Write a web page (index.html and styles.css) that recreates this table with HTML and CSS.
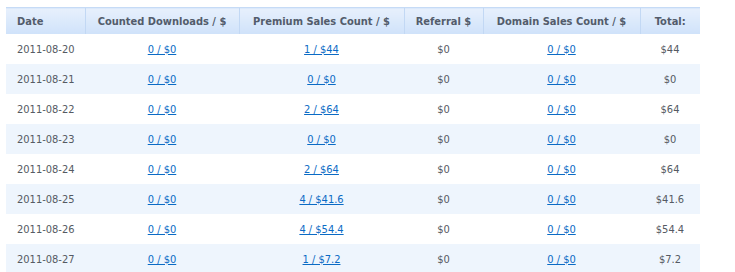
FILE: index.html
```html
<!DOCTYPE html>
<html>
<head>
<meta charset="utf-8">
<link rel="stylesheet" href="styles.css">
</head>
<body>
<div class="wrap">
<table class="stats">
  <colgroup>
    <col class="c-date"><col class="c-dl"><col class="c-prem"><col class="c-ref"><col class="c-dom"><col class="c-tot">
  </colgroup>
  <thead>
    <tr>
      <th class="left">Date</th>
      <th>Counted Downloads / $</th>
      <th>Premium Sales Count / $</th>
      <th>Referral $</th>
      <th>Domain Sales Count / $</th>
      <th>Total:</th>
    </tr>
  </thead>
  <tbody>
    <tr><td class="left">2011-08-20</td><td><a href="#">0 / $0</a></td><td><a href="#">1 / $44</a></td><td>$0</td><td><a href="#">0 / $0</a></td><td>$44</td></tr>
    <tr class="alt"><td class="left">2011-08-21</td><td><a href="#">0 / $0</a></td><td><a href="#">0 / $0</a></td><td>$0</td><td><a href="#">0 / $0</a></td><td>$0</td></tr>
    <tr><td class="left">2011-08-22</td><td><a href="#">0 / $0</a></td><td><a href="#">2 / $64</a></td><td>$0</td><td><a href="#">0 / $0</a></td><td>$64</td></tr>
    <tr class="alt"><td class="left">2011-08-23</td><td><a href="#">0 / $0</a></td><td><a href="#">0 / $0</a></td><td>$0</td><td><a href="#">0 / $0</a></td><td>$0</td></tr>
    <tr><td class="left">2011-08-24</td><td><a href="#">0 / $0</a></td><td><a href="#">2 / $64</a></td><td>$0</td><td><a href="#">0 / $0</a></td><td>$64</td></tr>
    <tr class="alt"><td class="left">2011-08-25</td><td><a href="#">0 / $0</a></td><td><a href="#">4 / $41.6</a></td><td>$0</td><td><a href="#">0 / $0</a></td><td>$41.6</td></tr>
    <tr><td class="left">2011-08-26</td><td><a href="#">0 / $0</a></td><td><a href="#">4 / $54.4</a></td><td>$0</td><td><a href="#">0 / $0</a></td><td>$54.4</td></tr>
    <tr class="alt"><td class="left">2011-08-27</td><td><a href="#">0 / $0</a></td><td><a href="#">1 / $7.2</a></td><td>$0</td><td><a href="#">0 / $0</a></td><td>$7.2</td></tr>
  </tbody>
</table>
</div>
</body>
</html>
```
FILE: styles.css
```css
html, body {
  margin: 0;
  padding: 0;
  background: #ffffff;
}
.wrap {
  padding: 7px 0 0 6px;
}
.stats {
  border-collapse: collapse;
  table-layout: fixed;
  width: 694px;
  font-family: "DejaVu Sans Condensed", "DejaVu Sans", sans-serif;
  font-stretch: condensed;
  font-size: 11px;
  color: #555a63;
}
.c-date { width: 79px; }
.c-dl { width: 154px; }
.c-prem { width: 165px; }
.c-ref { width: 79px; }
.c-dom { width: 157px; }
.c-tot { width: 60px; }
.stats th {
  height: 25px;
  padding: 1px 0 0 0;
  border-top: 1px solid #c6dbf6;
  border-left: 1px solid #c2d8f4;
  background: linear-gradient(#e7f0fc, #cfe2fa);
  color: #535c6b;
  font-weight: bold;
  text-align: center;
  white-space: nowrap;
}
.stats th:first-child { border-left: none; }
.stats td {
  height: 29px;
  padding: 1px 0 0 0;
  text-align: center;
  white-space: nowrap;
}
.stats .left {
  text-align: left;
  padding-left: 11px;
}
.stats tr.alt td { background: #eef5fd; }
.stats a {
  color: #0b6bc5;
  text-decoration: underline;
}
```
